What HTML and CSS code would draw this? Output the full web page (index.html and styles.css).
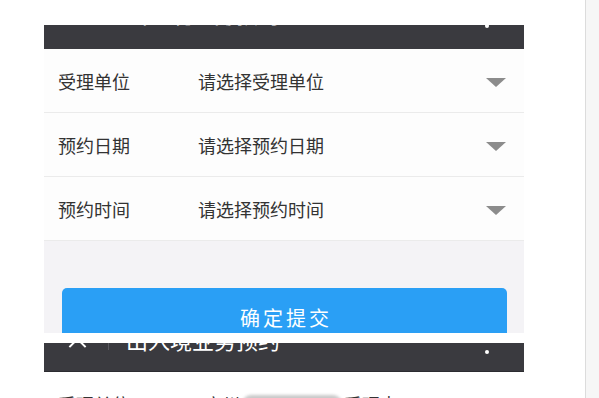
FILE: index.html
```html
<!DOCTYPE html>
<html>
<head>
    <meta charset="utf-8">
    <title>出入境业务预约</title>
    <link rel="stylesheet" href="styles.css">
</head>
<body>
    <div class="screen">
        <div class="phone">
            <div class="top-gap"></div>

            <div class="bar-clip bar-clip-first">
                <div class="bar">
                    <span class="bar-close"></span>
                    <span class="bar-sep"></span>
                    <span class="bar-title">出入境业务预约</span>
                    <span class="bar-menu"><i></i><i></i><i></i></span>
                </div>
            </div>

            <div class="form">
                <div class="form-row">
                    <span class="form-label">受理单位</span>
                    <span class="form-value">请选择受理单位</span>
                    <span class="form-arrow"></span>
                </div>
                <div class="form-row">
                    <span class="form-label">预约日期</span>
                    <span class="form-value">请选择预约日期</span>
                    <span class="form-arrow"></span>
                </div>
                <div class="form-row">
                    <span class="form-label">预约时间</span>
                    <span class="form-value">请选择预约时间</span>
                    <span class="form-arrow"></span>
                </div>
            </div>

            <div class="submit-area">
                <button class="submit-btn">确定提交</button>
            </div>

            <div class="shot-gap"></div>

            <div class="bar-clip bar-clip-second">
                <div class="bar">
                    <span class="bar-close"></span>
                    <span class="bar-sep"></span>
                    <span class="bar-title">出入境业务预约</span>
                    <span class="bar-menu"><i></i><i></i><i></i></span>
                </div>
            </div>

            <div class="form-row form-row-plain">
                <span class="form-label">受理单位</span>
                <span class="form-value form-value-filled">广州<span class="smudge"></span>受理点</span>
            </div>
        </div>
        <div class="edge"></div>
    </div>
</body>
</html>
```

FILE: styles.css
```css
html, body {
    margin: 0;
    padding: 0;
    background: #fff;
    overflow: hidden;
}

body {
    font-family: "Noto Sans CJK SC", "Noto Sans", sans-serif;
    color: #333;
}

.screen {
    display: flex;
    width: 599px;
    height: 398px;
    overflow: hidden;
}

.phone {
    width: 480px;
    margin-left: 44px;
    display: flex;
    flex-direction: column;
    flex-shrink: 0;
}

.edge {
    margin-left: auto;
    width: 13px;
    border-left: 1px solid #dcdcdc;
    background: #f6f6f6;
}

.top-gap {
    height: 25px;
    flex-shrink: 0;
}

/* title bar, cut off by the screenshot crop */
.bar-clip {
    overflow: hidden;
    background: #3a3a3f;
    flex-shrink: 0;
}

.bar-clip-first {
    height: 24px;
}

.bar-clip-first .bar {
    margin-top: -36px;
}

.bar-clip-second {
    height: 28px;
    border-bottom: 1px solid #2c2c30;
}

.bar-clip-second .bar {
    margin-top: -28px;
}

.bar {
    height: 48px;
    display: flex;
    align-items: center;
    position: relative;
    color: #fff;
}

.bar-close {
    position: relative;
    width: 18px;
    height: 18px;
    margin-left: 24px;
}

.bar-close::before,
.bar-close::after {
    content: "";
    position: absolute;
    left: -2px;
    top: 8px;
    width: 23px;
    height: 2px;
    background: #fff;
    transform: rotate(45deg);
}

.bar-close::after {
    transform: rotate(-45deg);
}

.bar-sep {
    width: 1px;
    height: 22px;
    background: #58585e;
    margin-left: 22px;
}

.bar-title {
    margin-left: 17px;
    font-size: 22px;
    line-height: 1;
}

.bar-menu {
    margin-left: auto;
    margin-right: 35px;
    display: flex;
    flex-direction: column;
    gap: 7px;
    position: relative;
    top: 2px;
}

.bar-menu i {
    display: block;
    width: 4px;
    height: 4px;
    border-radius: 50%;
    background: #fff;
}

/* form */
.form {
    background: #fdfdfd;
    flex-shrink: 0;
}

.form-row {
    height: 63px;
    display: flex;
    align-items: center;
    border-bottom: 1px solid #ebebeb;
    padding-left: 14px;
}

.form-label {
    width: 140px;
    font-size: 18px;
    color: #333;
}

.form-value {
    font-size: 18px;
    color: #333;
}

.form-arrow {
    margin-left: auto;
    margin-right: 18px;
    width: 0;
    height: 0;
    border-left: 10px solid transparent;
    border-right: 10px solid transparent;
    border-top: 9px solid #8c8c8c;
    margin-top: 4px;
}

.submit-area {
    height: 92px;
    background: #f4f3f6;
    overflow: hidden;
    padding: 47px 17px 0 18px;
    box-sizing: border-box;
    flex-shrink: 0;
}

.submit-btn {
    display: block;
    width: 100%;
    height: 58px;
    border: none;
    border-radius: 5px;
    background: #2a9ff5;
    color: #fff;
    font-family: inherit;
    font-size: 20px;
    letter-spacing: 3px;
    padding: 0 0 0 3px;
}

.shot-gap {
    height: 10px;
    flex-shrink: 0;
}

.form-row-plain {
    background: #fff;
    border-bottom: none;
    align-items: flex-start;
    padding-top: 19px;
    flex-shrink: 0;
}

.form-row-plain .form-label {
    width: 146px;
}

.form-value-filled {
    display: flex;
    align-items: center;
}

.smudge {
    display: inline-block;
    width: 100px;
    height: 18px;
    background: #c9c9c9;
    border-radius: 9px;
    filter: blur(1.5px);
    margin: 0 2px;
}
```
